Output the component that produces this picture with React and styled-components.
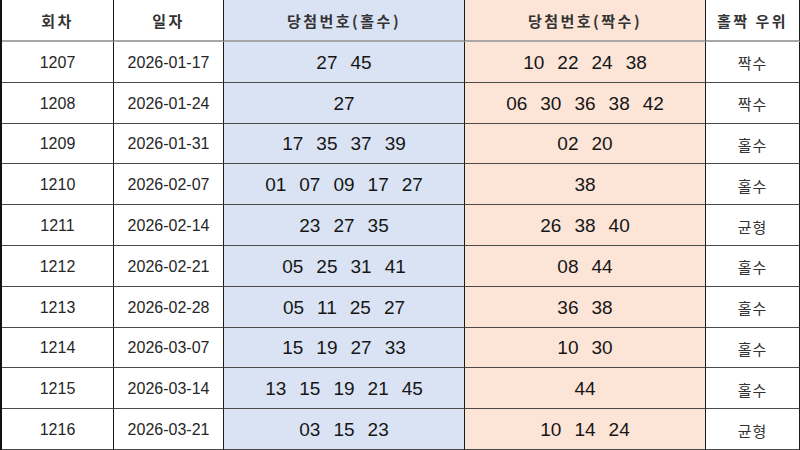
import React from 'react';
import styled, { createGlobalStyle } from 'styled-components';

const GlobalStyle = createGlobalStyle`
  html, body {
    margin: 0;
    padding: 0;
    background: #ffffff;
  }
  * {
    box-sizing: border-box;
  }
`;

const rows = [
  ['1207', '2026-01-17', ['27', '45'], ['10', '22', '24', '38'], '짝수'],
  ['1208', '2026-01-24', ['27'], ['06', '30', '36', '38', '42'], '짝수'],
  ['1209', '2026-01-31', ['17', '35', '37', '39'], ['02', '20'], '홀수'],
  ['1210', '2026-02-07', ['01', '07', '09', '17', '27'], ['38'], '홀수'],
  ['1211', '2026-02-14', ['23', '27', '35'], ['26', '38', '40'], '균형'],
  ['1212', '2026-02-21', ['05', '25', '31', '41'], ['08', '44'], '홀수'],
  ['1213', '2026-02-28', ['05', '11', '25', '27'], ['36', '38'], '홀수'],
  ['1214', '2026-03-07', ['15', '19', '27', '33'], ['10', '30'], '홀수'],
  ['1215', '2026-03-14', ['13', '15', '19', '21', '45'], ['44'], '홀수'],
  ['1216', '2026-03-21', ['03', '15', '23'], ['10', '14', '24'], '균형'],
];

const Table = styled.div`
  width: 800px;
  height: 450px;
  display: grid;
  grid-template-columns: 112px 110px 241px 241px 1fr;
  grid-template-rows: 42px repeat(10, 1fr);
  border-left: 2px solid #111;
  overflow: hidden;
`;

const Cell = styled.div`
  display: flex;
  align-items: center;
  justify-content: center;
  padding-top: ${props => (props.$head ? '0' : '2px')};
  background: ${props => props.$bg || '#ffffff'};
  border-right: 1px solid #1a1a1a;
  border-bottom: ${props => (props.$head ? '2px solid #a8a8a8' : '1.5px solid #4a4a4a')};
  font-family: 'Liberation Sans', Arial, 'Noto Sans CJK KR', sans-serif;
  color: #222;
`;

const HeadText = styled.span`
  font-family: 'Noto Sans CJK KR', sans-serif;
  font-weight: 700;
  font-size: 15px;
  letter-spacing: 2.5px;
  color: #333;
`;

const Plain = styled.span`
  font-size: 16px;
  color: #262626;
`;

const Numbers = styled.span`
  display: flex;
  gap: 13px;
  font-size: 19px;
  color: #161616;
`;

const Verdict = styled.span`
  font-family: 'Noto Sans CJK KR', sans-serif;
  font-size: 15px;
  letter-spacing: 1px;
  color: #333;
`;

const ODD_BG = '#dae3f3';
const EVEN_BG = '#fce4d6';

export default function App() {
  return (
    <>
      <GlobalStyle />
      <Table>
        <Cell $head><HeadText>회차</HeadText></Cell>
        <Cell $head><HeadText>일자</HeadText></Cell>
        <Cell $head $bg={ODD_BG}><HeadText>당첨번호(홀수)</HeadText></Cell>
        <Cell $head $bg={EVEN_BG}><HeadText>당첨번호(짝수)</HeadText></Cell>
        <Cell $head><HeadText>홀짝 우위</HeadText></Cell>
        {rows.map(([round, date, odd, even, verdict]) => (
          <React.Fragment key={round}>
            <Cell><Plain>{round}</Plain></Cell>
            <Cell><Plain>{date}</Plain></Cell>
            <Cell $bg={ODD_BG}>
              <Numbers>{odd.map(n => <span key={n}>{n}</span>)}</Numbers>
            </Cell>
            <Cell $bg={EVEN_BG}>
              <Numbers>{even.map(n => <span key={n}>{n}</span>)}</Numbers>
            </Cell>
            <Cell><Verdict>{verdict}</Verdict></Cell>
          </React.Fragment>
        ))}
      </Table>
    </>
  );
}
